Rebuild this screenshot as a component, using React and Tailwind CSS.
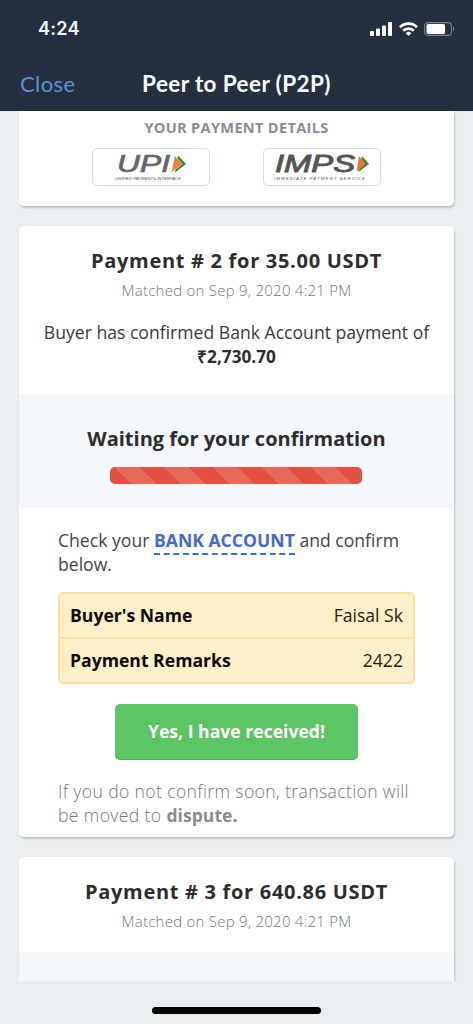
const details = [
  { label: "Buyer's Name", value: 'Faisal Sk' },
  { label: 'Payment Remarks', value: '2422' },
];

function StatusBar() {
  return (
    <div className="flex h-[58px] items-center justify-between pl-[38px] pr-[18px]">
      <span className="font-['Inter'] text-[18px] font-semibold leading-6 tracking-[0.3px] text-white">4:24</span>
      <div className="flex items-center gap-[6px]">
        <svg width="23" height="14" viewBox="0 0 23 14" fill="#fff">
          <rect x="0" y="9" width="4" height="5" rx="1" />
          <rect x="6" y="6.5" width="4" height="7.5" rx="1" />
          <rect x="12" y="3.5" width="4" height="10.5" rx="1" />
          <rect x="18" y="0" width="4" height="14" rx="1" />
        </svg>
        <svg width="19" height="14" viewBox="0 0 19 14" fill="none" stroke="#fff" strokeWidth="2.8">
          <path d="M1 5.2a12 12 0 0 1 17 0" />
          <path d="M4.2 8.8a7.5 7.5 0 0 1 10.6 0" />
          <path d="M9.5 14 6.7 11.2a4 4 0 0 1 5.6 0Z" fill="#fff" stroke="none" />
        </svg>
        <svg width="31" height="14" viewBox="0 0 31 14">
          <rect x="0.6" y="0.6" width="26.8" height="12.8" rx="3.2" fill="none" stroke="#7d8590" strokeWidth="1.1" />
          <rect x="2.5" y="2.1" width="18.5" height="9.8" rx="1.5" fill="#fff" />
          <path d="M29 4.6c1.6.6 1.6 4.2 0 4.8Z" fill="#7d8590" />
        </svg>
      </div>
    </div>
  );
}

function Header() {
  return (
    <header className="h-[111px] shrink-0 border-b border-[#1d2737] bg-[#252f3f]">
      <StatusBar />
      <div className="grid h-[52px] grid-cols-[1fr_auto_1fr] items-center pl-[20px] pr-[20px]">
        <a className="font-['Lato'] text-[22px] leading-7 tracking-[0.4px] text-[#5b93d8]">Close</a>
        <h1 className="font-['Lato'] text-[22.5px] font-bold leading-7 tracking-[0.4px] text-white">Peer to Peer (P2P)</h1>
      </div>
    </header>
  );
}

function UpiLogo() {
  return (
    <svg width="72" height="28" viewBox="0 0 72 28" className="overflow-visible">
      <text x="2" y="18" textLength="53" lengthAdjust="spacingAndGlyphs" fontFamily="Liberation Sans" fontStyle="italic" fontSize="23" fill="#666" stroke="#666" strokeWidth="0.7">UPI</text>
      <path d="M63 1.5 71 10 60 18.5Z" fill="#2f8a3c" />
      <path d="M59.5 1.5 67.5 10 56.5 18.5Z" fill="#f0803a" stroke="#fff" strokeWidth="0.4" />
      <text x="0" y="25.5" textLength="66" lengthAdjust="spacingAndGlyphs" fontFamily="Liberation Sans" fontStyle="italic" fontSize="4.4" fill="#555">UNIFIED PAYMENTS INTERFACE</text>
    </svg>
  );
}

function ImpsLogo() {
  return (
    <svg width="96" height="28" viewBox="0 0 96 28" className="overflow-visible">
      <text x="1" y="18" textLength="80" lengthAdjust="spacingAndGlyphs" fontFamily="Liberation Sans" fontStyle="italic" fontSize="23" fill="#555" stroke="#555" strokeWidth="0.9">IMPS</text>
      <path d="M88 2 95 10 84.5 18Z" fill="#2f8a3c" />
      <path d="M85 2 91.5 10 82.5 18Z" fill="#ee7434" />
      <text x="0" y="25.5" textLength="91" fontFamily="Liberation Sans" fontStyle="italic" fontSize="4.4" fill="#555">IMMEDIATE PAYMENT SERVICE</text>
    </svg>
  );
}

function PaymentTitle({ title }) {
  return (
    <div className="text-center">
      <h2 className="text-[20px] font-bold leading-7 tracking-[0.7px] text-[#2d2d2d]">{title}</h2>
      <p className="mt-[3px] text-[15px] font-light leading-6 tracking-[0.25px] text-[#6f777d]">Matched on Sep 9, 2020 4:21 PM</p>
    </div>
  );
}

export default function App() {
  return (
    <div className="flex h-[1024px] w-[473px] flex-col overflow-hidden bg-[#eaeef1] font-['Open_Sans',sans-serif]">
      <Header />

      <main className="flex h-[870px] shrink-0 flex-col gap-[20px] overflow-hidden pl-[19px] pr-[19px]">
        {/* Accepted methods, scrolled under the header */}
        <section className="h-[95px] w-[435px] shrink-0 rounded-b-[5px] bg-white pt-[4px] shadow-[1px_2px_2px_rgba(0,0,0,0.18)]">
          <h3 className="text-center text-[14.6px] font-bold leading-6 tracking-[0.3px] text-[#868e94]">YOUR PAYMENT DETAILS</h3>
          <div className="mt-[9px] flex justify-center gap-[53px]">
            <div className="flex h-[38px] w-[118px] items-center justify-center rounded-[5px] border border-[#d3e0ea] pt-px">
              <UpiLogo />
            </div>
            <div className="flex h-[38px] w-[118px] items-center justify-center rounded-[5px] border border-[#d3e0ea] pt-px">
              <ImpsLogo />
            </div>
          </div>
        </section>

        <section className="flex h-[611px] w-[435px] shrink-0 flex-col rounded-[5px] bg-white shadow-[1px_2px_2px_rgba(0,0,0,0.18)]">
          <div className="h-[168px] pt-[21px]">
            <PaymentTitle title="Payment # 2 for 35.00 USDT" />
            <p className="mt-[18px] whitespace-nowrap text-center text-[17.6px] leading-6 text-[#3a3a3a]">
              Buyer has confirmed Bank Account payment of
              <br />
              <b className="text-[17.2px] text-[#2d2d2d]">₹2,730.70</b>
            </p>
          </div>

          <div className="flex h-[114px] flex-col items-center bg-[#f4f7fc] pt-[31px]">
            <h3 className="text-[20px] font-bold leading-7 text-[#2d2d2d]">Waiting for your confirmation</h3>
            <div className="mr-[2px] mt-[14px] h-[17px] w-[252px] rounded-[5px] bg-[#e2503f] bg-[linear-gradient(45deg,rgba(255,255,255,0.15)_25%,transparent_25%,transparent_50%,rgba(255,255,255,0.15)_50%,rgba(255,255,255,0.15)_75%,transparent_75%)] bg-[length:49px_49px] bg-[position:5px_0px]" />
          </div>

          <div className="flex flex-col px-[39px] pt-[20px]">
            <p className="whitespace-nowrap text-[17.6px] leading-6 text-[#444]">
              Check your <b className="border-b-2 border-dashed border-[#4468d0] pb-px font-bold text-[#4468d0]">BANK ACCOUNT</b> and confirm
              <br />
              below.
            </p>

            <dl className="mt-[16px] w-[357px] rounded-[5px] border-2 border-[#f4e3a9] bg-[#fdf0c8]">
              {details.map((row, i) => (
                <div key={row.label} className={i ? 'flex h-[45px] items-center justify-between border-t-2 border-[#f4e3a9] px-[10px] pb-[2px]' : 'flex h-[43px] items-center justify-between px-[10px] pb-[2px]'}>
                  <dt className="text-[17.6px] font-bold leading-6 text-[#0c0a04]">{row.label}</dt>
                  <dd className="text-[17.6px] leading-6 text-[#221d10]">{row.value}</dd>
                </div>
              ))}
            </dl>

            <button className="mt-[20px] h-[56px] w-[243px] self-center rounded-[5px] border-b border-[#53ac58] bg-[#5cc563] text-[17.6px] font-bold text-white">
              Yes, I have received!
            </button>

            <p className="mt-[19px] whitespace-nowrap text-[17.6px] font-light leading-6 tracking-[0.36px] text-[#6f777d]">
              If you do not confirm soon, transaction will
              <br />
              be moved to <b className="font-bold tracking-normal text-[#868e94]">dispute.</b>
            </p>
          </div>
        </section>

        <section className="w-[435px] shrink-0 rounded-t-[5px] bg-white shadow-[1px_2px_2px_rgba(0,0,0,0.18)]">
          <div className="h-[95px] pt-[21px]">
            <PaymentTitle title="Payment # 3 for 640.86 USDT" />
          </div>
          <div className="h-[114px] bg-[#f4f7fc]" />
        </section>
      </main>

      {/* Home indicator */}
      <footer className="flex grow justify-center pt-[26px]">
        <div className="h-[7px] w-[169px] rounded-full bg-black" />
      </footer>
    </div>
  );
}
